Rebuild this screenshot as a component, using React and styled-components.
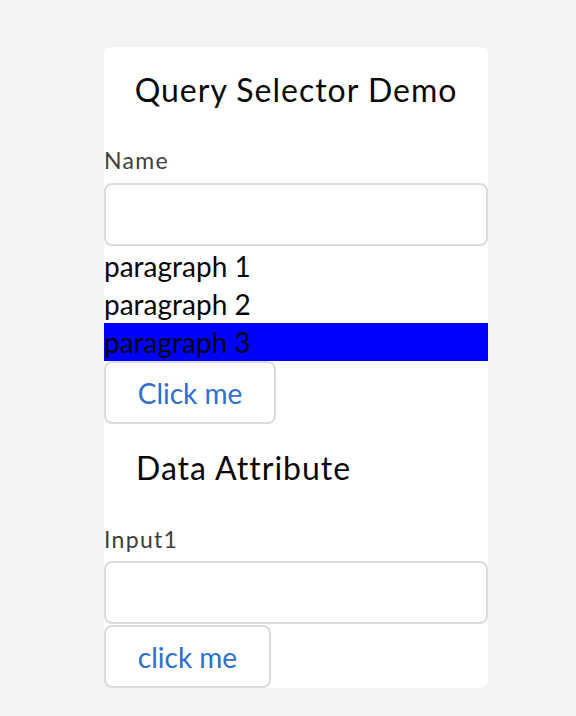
import React from 'react';
import styled, { createGlobalStyle } from 'styled-components';

const GlobalStyle = createGlobalStyle`
  html, body {
    margin: 0;
    padding: 0;
    background: #f3f3f3;
    font-family: Lato, "Liberation Sans", sans-serif;
  }
`;

const Card = styled.div`
  width: 384px;
  margin: 47px 0 0 104px;
  background: #fff;
  border-radius: 8px;
  display: flex;
  flex-direction: column;
  align-items: flex-start;
`;

const Heading = styled.h1`
  align-self: stretch;
  margin: 0;
  font-size: 32px;
  font-weight: 400;
  line-height: 40px;
  letter-spacing: 1px;
  color: #080707;
  text-align: ${p => (p.center ? 'center' : 'left')};
  padding: ${p => p.pad};
`;

const Label = styled.label`
  font-size: 23px;
  line-height: 30px;
  letter-spacing: 1.3px;
  color: #3e3e3c;
  margin-bottom: ${p => p.gap}px;
`;

const Input = styled.input`
  box-sizing: border-box;
  width: 100%;
  height: 63px;
  border: 2px solid #dddbda;
  border-radius: 8px;
  background: #fff;
  font-size: 20px;
  padding: 0 16px;
  outline: none;
`;

const Para = styled.p`
  align-self: stretch;
  margin: 0;
  font-size: 28px;
  line-height: 38px;
  color: #080707;
  background: ${p => (p.highlight ? '#0000ff' : 'transparent')};
`;

const Button = styled.button`
  box-sizing: border-box;
  height: 63px;
  width: ${p => p.w}px;
  border: 2px solid #dddbda;
  border-radius: 8px;
  background: #fff;
  color: #2e6fcc;
  font-family: inherit;
  font-size: 28px;
  padding: 0;
  cursor: pointer;
`;

const Spacer = styled.div`
  height: ${p => p.h}px;
`;

export default function App() {
  return (
    <>
      <GlobalStyle />
      <Card>
        <Heading center pad="23px 0 35px">Query Selector Demo</Heading>
        <Label gap={8}>Name</Label>
        <Input type="text" />
        <Spacer h={1} />
        <Para>paragraph 1</Para>
        <Para>paragraph 2</Para>
        <Para highlight>paragraph 3</Para>
        <Button w={172}>Click me</Button>
        <Heading pad="24px 0 36px 32px">Data Attribute</Heading>
        <Label gap={7}>Input1</Label>
        <Input type="text" />
        <Spacer h={1} />
        <Button w={167}>click me</Button>
      </Card>
    </>
  );
}
